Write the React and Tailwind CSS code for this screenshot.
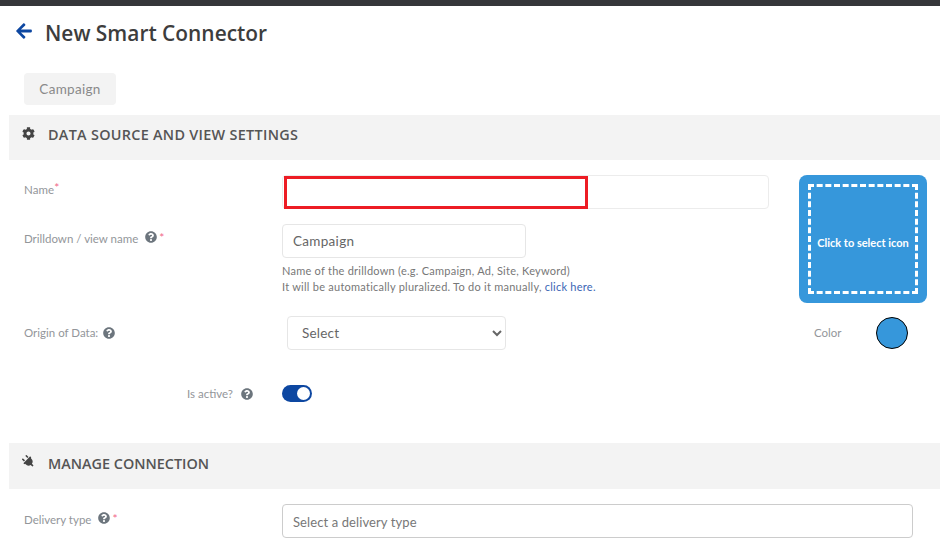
import React from 'react';
import { FaArrowLeft, FaCog, FaPlug, FaQuestionCircle } from 'react-icons/fa';

const Help = ({ className = '' }) => (
  <FaQuestionCircle className={`text-[12px] text-[#6c757d] ${className}`} />
);

const Req = ({ className = '' }) => <span className={`text-[#f1668a] text-[12px] ${className}`}>*</span>;

const SectionHead = ({ icon, title, className = '', titleClass = '' }) => (
  <div className={`ml-[9px] flex items-center bg-[#f3f3f3] text-[#555555] ${className}`}>
    <div className="w-[39px] pl-[13px] -mt-[9px] text-[13px] text-[#444444]">{icon}</div>
    <h2 className={`-mt-[5px] font-['Open_Sans',sans-serif] text-[14.4px] font-semibold ${titleClass}`}>{title}</h2>
  </div>
);

const App = () => {
  return (
    <div className="h-[550px] w-[940px] overflow-hidden bg-white font-['Lato','Noto_Sans',sans-serif] text-[#93969a]">
      <div className="h-[6px] bg-[#35363a]" />

      {/* Title */}
      <div className="flex h-[54px] items-center pl-[15px] pt-[1px]">
        <FaArrowLeft className="-mt-[6px] text-[18px] text-[#0d47a1]" />
        <h1 className="ml-[12px] -mt-[1px] font-['Open_Sans',sans-serif] text-[20.9px] font-semibold leading-none text-[#3d3d3d]">New Smart Connector</h1>
      </div>

      <div className="ml-[24px] mt-[13px] flex h-[32px] w-[92px] items-center justify-center rounded bg-[#f3f3f3] text-[13.5px] tracking-[0.3px] text-[#8a8a8a]">
        Campaign
      </div>

      <SectionHead className="mt-[10px] h-[45px]" titleClass="tracking-[0.3px]" icon={<FaCog />} title="DATA SOURCE AND VIEW SETTINGS" />

      {/* Name, drilldown and icon picker */}
      <div className="mt-[15px] flex">
        <div className="w-[799px] pl-[24px]">
          <div className="flex">
            <div className="w-[258px] pt-[6px] text-[11.5px] tracking-[0.1px]">
              Name<Req className="relative -top-[2px]" />
            </div>
            <div className="relative h-[34px] w-[487px] rounded border border-[#ececec]">
              <div className="absolute top-0 left-[1px] h-[33px] w-[304px] border-[3px] border-[#ed1c24]" />
            </div>
          </div>

          <div className="mt-[15px] flex">
            <div className="flex w-[258px] items-start pt-[6px] text-[11.5px]">
              Drilldown / view name
              <Help className="ml-[7px] mt-[1px]" />
              <Req className="ml-[2px] -mt-[1px]" />
            </div>
            <div>
              <input
                readOnly
                value="Campaign"
                className="h-[34px] w-[244px] rounded border border-[#e6e6e6] px-[10px] text-[13.5px] tracking-[0.3px] text-[#666666] outline-none"
              />
              <p className="mt-[5px] text-[11px] leading-[16px] tracking-[0.25px] text-[#777777]">
                Name of the drilldown (e.g. Campaign, Ad, Site, Keyword)
                <br />
                It will be automatically pluralized. To do it manually, <a href="#" className="text-[#3a66b5]">click here.</a>
              </p>
            </div>
          </div>
        </div>

        <div className="flex h-[128px] w-[128px] items-center justify-center rounded-lg bg-[#3697db] p-[9px]">
          <div className="flex h-full w-full items-center justify-center border-[3px] border-dashed border-white pt-[8px] text-[11px] font-bold whitespace-nowrap text-white">
            Click to select icon
          </div>
        </div>
      </div>

      {/* Origin + color */}
      <div className="mt-[13px] flex items-center pl-[24px]">
        <div className="flex w-[263px] items-center text-[11.5px]">
          Origin of Data:
          <Help className="ml-[5px]" />
        </div>
        <select className="h-[34px] w-[219px] rounded border border-[#e6e6e6] bg-white pl-[10px] text-[13.5px] tracking-[0.2px] text-[#666666] outline-none">
          <option>Select</option>
        </select>
        <span className="ml-[308px] text-[11.5px]">Color</span>
        <span className="ml-[34px] h-[32px] w-[32px] rounded-full border border-black bg-[#3697db]" />
      </div>

      {/* Is active */}
      <div className="mt-[35px] flex items-center">
        <div className="flex w-[282px] items-center pl-[187px] text-[11.5px]">
          Is active?
          <Help className="ml-[8px]" />
        </div>
        <div className="flex h-[17px] w-[30px] items-center justify-end rounded-full bg-[#0d47a1] pr-[2px]">
          <span className="h-[13px] w-[13px] rounded-full bg-white" />
        </div>
      </div>

      <SectionHead className="mt-[41px] h-[46px]" icon={<FaPlug className="-rotate-45" />} title="MANAGE CONNECTION" />

      {/* Delivery type */}
      <div className="mt-[15px] flex pl-[24px]">
        <div className="flex w-[258px] items-start pt-[7px] text-[11.5px]">
          Delivery type
          <Help className="ml-[7px] mt-[1px]" />
          <Req className="ml-[2px] -mt-[1px]" />
        </div>
        <input
          readOnly
          placeholder="Select a delivery type"
          className="h-[34px] w-[631px] rounded border border-[#cccccc] px-[10px] pt-[2px] text-[13px] tracking-[0.1px] outline-none placeholder:text-[#777777]"
        />
      </div>
    </div>
  );
};

export default App;
